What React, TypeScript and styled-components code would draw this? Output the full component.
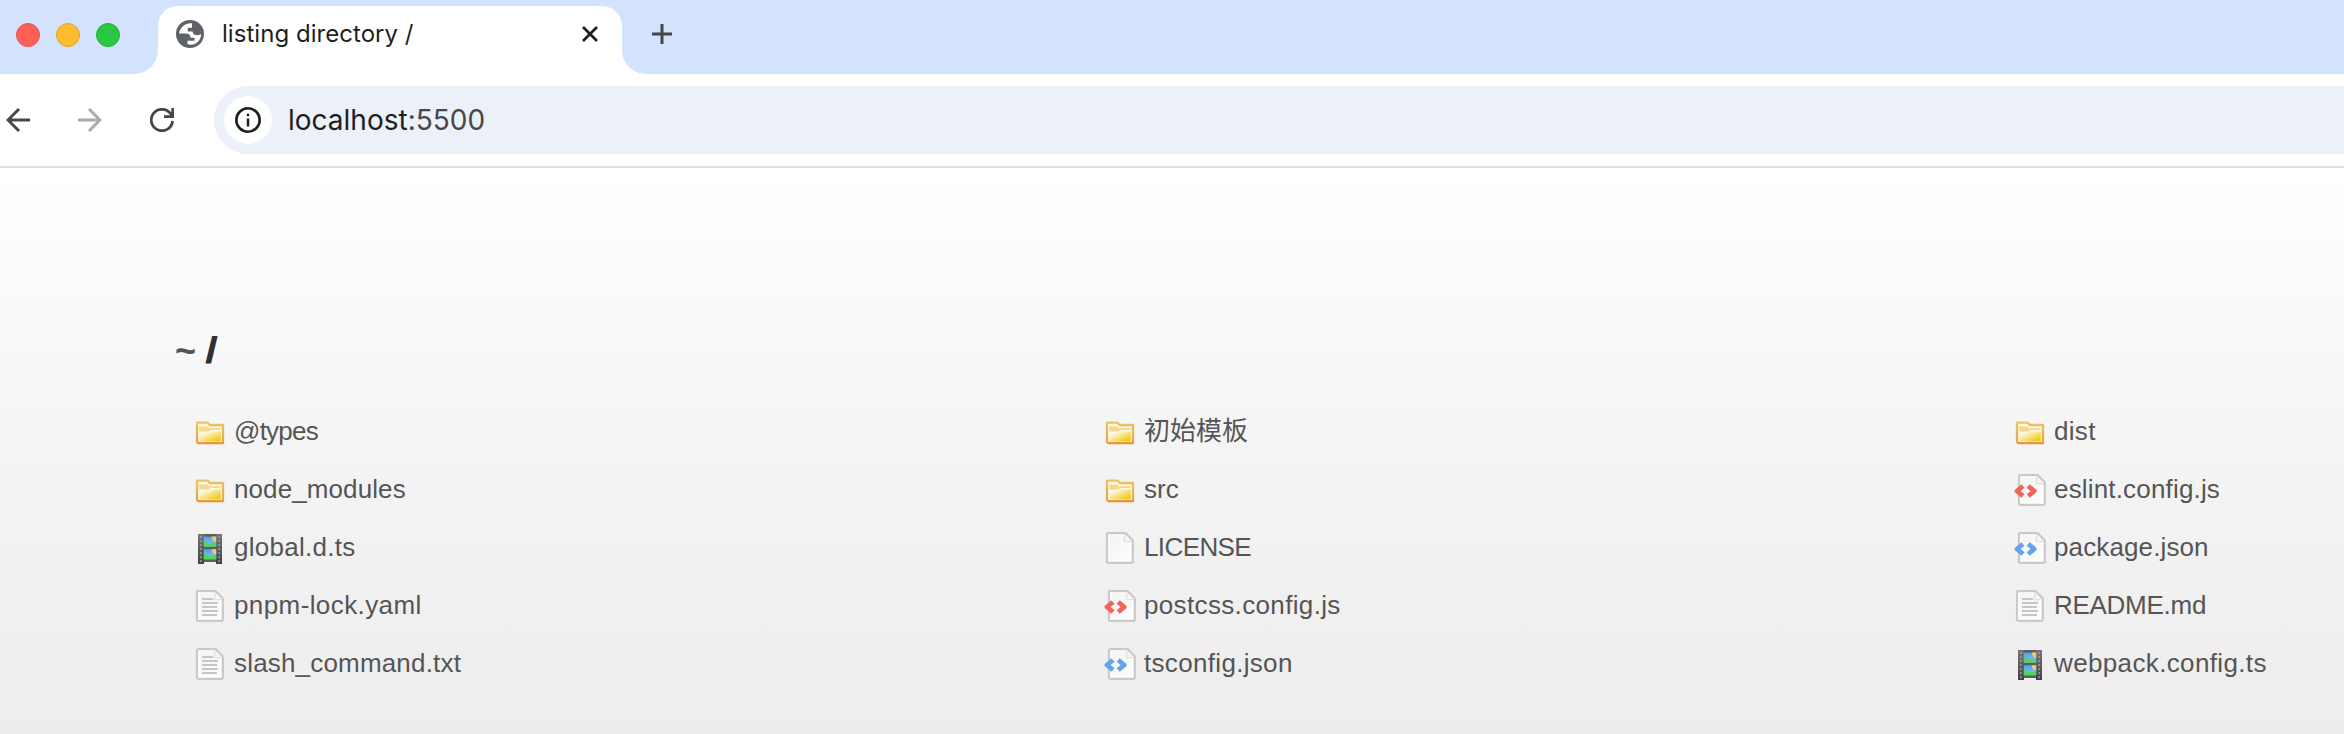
import React from "react";
import styled, { createGlobalStyle } from "styled-components";

const Global = createGlobalStyle`
  *, *::before, *::after { box-sizing: border-box; }
  body { margin: 0; overflow: hidden; background: #fff; }
  #root { height: 734px; }
`;

const Window = styled.div`
  display: flex;
  flex-direction: column;
  width: 100%;
  height: 734px;
  overflow: hidden;
`;

const TabStrip = styled.header`
  display: flex;
  flex: none;
  align-items: flex-start;
  height: 74px;
  background: #d3e3fd;
`;

const WindowControls = styled.div`
  display: flex;
  gap: 16px;
  width: 134px;
  padding: 23px 0 0 16px;
`;

const Light = styled.span<{ $fill: string; $edge: string }>`
  width: 24px;
  height: 24px;
  border-radius: 50%;
  border: 1px solid ${(p) => p.$edge};
  background: ${(p) => p.$fill};
`;

const Flare = styled.span<{ $side: "left" | "right" }>`
  flex: none;
  align-self: flex-end;
  width: 24px;
  height: 24px;
  background: radial-gradient(
    circle at ${(p) => (p.$side === "left" ? "0 0" : "100% 0")},
    transparent 23.5px,
    #fff 24.5px
  );
`;

const Tab = styled.div`
  display: flex;
  align-items: flex-start;
  width: 464px;
  height: 68px;
  margin-top: 6px;
  padding: 14px 23px 0 18px;
  border-radius: 20px 20px 0 0;
  background: #fff;
`;

const TabTitle = styled.span`
  flex: 1;
  margin: -1px 0 0 18px;
  font: 400 24px/30px Inter, "Liberation Sans", sans-serif;
  letter-spacing: 0.04px;
  color: #1f1f1f;
  white-space: nowrap;
`;

const NewTab = styled.svg`
  margin: 24px 0 0 6px;
`;

const TabClose = styled.svg`
  margin-top: 5px;
`;

const Toolbar = styled.div`
  display: flex;
  flex: none;
  align-items: center;
  height: 94px;
  border-bottom: 2px solid #e0e0e0;
  background: #fff;
`;

const NavButtons = styled.nav`
  display: flex;
  gap: 48px;
  width: 214px;
  padding-left: 6px;
`;

const AddressBar = styled.div`
  display: flex;
  flex: 1;
  align-items: center;
  height: 68px;
  padding-left: 10px;
  border-radius: 34px 0 0 34px;
  background: #ecf0f9;
`;

const SiteInfo = styled.span`
  display: grid;
  place-items: center;
  width: 48px;
  height: 48px;
  border-radius: 50%;
  background: #fff;
`;

const Address = styled.span`
  margin-left: 16px;
  font: 400 28px/34px Inter, "Liberation Sans", sans-serif;
  color: #1f1f1f;
`;

const Port = styled.span`
  color: #474747;
`;

const Page = styled.main`
  flex: 1;
  padding: 161px 0 0 175px;
  background: linear-gradient(#fff 0, #f4f4f4 290px, #f2f1f1 400px, #eeeced 566px);
  font-family: "Liberation Sans", sans-serif;
`;

const Heading = styled.h1`
  display: flex;
  gap: 9px;
  margin: 0;
  font-size: 36px;
  line-height: 44px;
  color: #303030;
`;

const HomeLink = styled.a`
  color: #555;
`;

const CurrentDir = styled.span`
  transform: scaleX(1.3);
  transform-origin: left;
`;

const Listing = styled.ul`
  display: grid;
  grid-template-columns: repeat(3, 910px);
  grid-auto-rows: 58px;
  margin: 30px 0 0;
  padding: 0 0 0 19px;
  list-style: none;
`;

const Entry = styled.li`
  display: flex;
  align-items: center;
`;

const Name = styled.span<{ $tracking: number }>`
  margin: 0 0 2px 8px;
  font-family: "Liberation Sans", "Noto Sans CJK SC", sans-serif;
  font-size: 26px;
  line-height: 30px;
  letter-spacing: ${(p) => p.$tracking}px;
  color: #555;
  white-space: nowrap;
`;

const Defs = styled.svg`
  display: block;
`;

type Kind = "folder" | "film" | "text" | "blank" | "red" | "blue";

const entries: [Kind, string, number][] = [
  ["folder", "@types", -0.75],
  ["folder", "初始模板", 0],
  ["folder", "dist", 0.3],
  ["folder", "node_modules", 0.1],
  ["folder", "src", 0],
  ["red", "eslint.config.js", 0.17],
  ["film", "global.d.ts", 0.27],
  ["blank", "LICENSE", -0.6],
  ["blue", "package.json", 0.12],
  ["text", "pnpm-lock.yaml", 0.4],
  ["red", "postcss.config.js", 0.35],
  ["text", "README.md", -0.28],
  ["text", "slash_command.txt", 0.18],
  ["blue", "tsconfig.json", 0.32],
  ["film", "webpack.config.ts", 0.36],
];

const Gradients = () => (
  <Defs width="0" height="0">
    <defs>
      <linearGradient id="folderEdge" x1="0" y1="0" x2="0" y2="1">
        <stop offset="0" stopColor="#e8c566" />
        <stop offset="1" stopColor="#e5a04f" />
      </linearGradient>
      <linearGradient id="folderFill" x1="0" y1="0" x2="1" y2="1">
        <stop offset="0.15" stopColor="#fffbe9" />
        <stop offset="0.5" stopColor="#f8e284" />
        <stop offset="0.85" stopColor="#f0cb1e" />
      </linearGradient>
      <linearGradient id="paper" x1="0" y1="0" x2="1" y2="1">
        <stop offset="0" stopColor="#f3f3f3" />
        <stop offset="1" stopColor="#fdfdfd" />
      </linearGradient>
      <linearGradient id="filmEdge" x1="0" y1="0" x2="0" y2="1">
        <stop offset="0" stopColor="#747474" />
        <stop offset="1" stopColor="#404040" />
      </linearGradient>
      <linearGradient id="sky" x1="0" y1="0" x2="0" y2="1">
        <stop offset="0" stopColor="#4aa0ea" />
        <stop offset="1" stopColor="#86cdf0" />
      </linearGradient>
    </defs>
  </Defs>
);

const Folder = () => (
  <>
    <path d="M1.5 3.3h5.3l1.1 1.2h6.600v9.100H2.200l-.7-.7z" fill="#fff6dc" stroke="url(#folderEdge)" strokeWidth="1.150" strokeLinejoin="round" />
    <path d="M2.600 5.200h3.900l.9.900h5.900v.9H8.200l-.9.800H2.600z" fill="#f3d88f" />
    <path d="M2.800 8.600h4.700l.9-.9h5v5H2.800z" fill="url(#folderFill)" />
    <path d="M1.800 13.600h12.900" stroke="#e39544" strokeWidth=".9" />
  </>
);

const Sheet = ({ x = 0 }: { x?: number }) => (
  <g transform={`translate(${x} 0)`}>
    <path d="M2 .6h8.800l3.600 3.600v10.700q0 .5-.5.5H2q-.5 0-.5-.5V1.100q0-.5.5-.5z" fill="#fff" stroke="#c9c9c9" strokeWidth="1.100" />
    <path d="M2.800 1.800h7.500v3h2.900v9.400H2.800z" fill="url(#paper)" />
    <path d="M10.300 1.300v3.500h3.600" fill="#f6f6f6" stroke="#e0e0e0" strokeWidth=".7" />
  </g>
);

const Film = () => (
  <>
    <rect x="2" y="1" width="12" height="14" fill="#5c5c5c" />
    <rect x="2" y="1" width="3" height="15" fill="url(#filmEdge)" />
    <rect x="11" y="1" width="3" height="15" fill="url(#filmEdge)" />
    {[2.3, 8.600].map((y) => (
      <g key={y} transform={`translate(4.900 ${y})`}>
        <rect width="6.200" height="5" fill="url(#sky)" />
        <path d="M3.900 0h2.300v2.700Q3.900 2.300 3.900 0z" fill="#f6c95c" />
        <path d="M0 2.100q1.700.2 3 1.500l3.200-.6v2H0z" fill="#52d460" />
      </g>
    ))}
    <path d="M3.400 2v13.500M12.600 2v13.500" stroke="#a8a8a8" strokeWidth=".9" strokeDasharray="1.100 .9" opacity=".75" />
  </>
);

const FileIcon = ({ kind }: { kind: Kind }) => (
  <svg width="32" height="32" viewBox="0 0 16 16">
    {kind === "folder" && <Folder />}
    {kind === "film" && <Film />}
    {(kind === "text" || kind === "blank") && <Sheet />}
    {kind === "text" && (
      <path d="M4 4.500h5.500M4 6.500h8M4 8.500h7.500M4 10.500h8M4 12.500h7.500" stroke="#c6c6c6" strokeWidth=".95" />
    )}
    {(kind === "red" || kind === "blue") && (
      <>
        <Sheet x={1} />
        <path
          d="M4.500 6 1.500 8.500l3 2.500M7.100 6l3 2.500-3 2.500"
          fill="none"
          stroke={kind === "red" ? "#f2635a" : "#62a5ea"}
          strokeWidth="2.400"
          strokeLinejoin="round"
        />
      </>
    )}
  </svg>
);

export default function App() {
  return (
    <Window>
      <Global />
      <TabStrip>
        <WindowControls>
          <Light $fill="#ff5f57" $edge="#e9544c" />
          <Light $fill="#febc2e" $edge="#dfa32a" />
          <Light $fill="#28c840" $edge="#22b038" />
        </WindowControls>
        <Flare $side="left" />
        <Tab>
          <svg width="28" height="28" viewBox="0 0 28 28">
            <circle cx="14" cy="14" r="14" fill="#5f6368" />
            <path d="M16 3.200C9.500 2.500 4 7 3 13.500h6.500c3.500 0 5 1.500 5 4.200H18.500v3h-7v3.400c2.300.9 5 .8 7.200-.1 4-1.800 6.300-5.400 6.300-10-1.600 1.200-3.600 1.500-5.500 1-2-.5-2.800-1.700-2.800-3.600h-4.900V7.700H16z" fill="#fff" />
          </svg>
          <TabTitle>listing directory /</TabTitle>
          <TabClose width="18" height="18" viewBox="0 0 18 18">
            <path d="m2 2 14 14M16 2 2 16" stroke="#1f1f1f" strokeWidth="2.800" />
          </TabClose>
        </Tab>
        <Flare $side="right" />
        <NewTab width="20" height="20" viewBox="0 0 20 20">
          <path d="M10 0v20M0 10h20" stroke="#474747" strokeWidth="3" />
        </NewTab>
      </TabStrip>
      <Toolbar>
        <NavButtons>
          <svg width="24" height="24" viewBox="0 0 24 24">
            <path d="M24 12H2M13 1 2 12l11 11" fill="none" stroke="#474747" strokeWidth="2.900" />
          </svg>
          <svg width="24" height="24" viewBox="0 0 24 24">
            <path d="M0 12h22M11 1l11 11-11 11" fill="none" stroke="#ababab" strokeWidth="2.900" />
          </svg>
          <svg width="24" height="24" viewBox="0 0 24 24">
            <path d="M22.600 13A10.700 10.700 0 1 1 20.200 5.200L22.500 8.500M22.700 0v8.700H14" fill="none" stroke="#474747" strokeWidth="2.800" />
          </svg>
        </NavButtons>
        <AddressBar>
          <SiteInfo>
            <svg width="26" height="26" viewBox="0 0 26 26">
              <circle cx="13" cy="13" r="11.700" fill="none" stroke="#1f1f1f" strokeWidth="2.600" />
              <path d="M13 11.500v8M13 6.700v2.500" stroke="#1f1f1f" strokeWidth="2.500" />
            </svg>
          </SiteInfo>
          <Address>
            localhost<Port>:5500</Port>
          </Address>
        </AddressBar>
      </Toolbar>
      <Page>
        <Gradients />
        <Heading>
          <HomeLink>~</HomeLink>
          <CurrentDir>/</CurrentDir>
        </Heading>
        <Listing>
          {entries.map(([kind, name, tracking]) => (
            <Entry key={name}>
              <FileIcon kind={kind} />
              <Name $tracking={tracking}>{name}</Name>
            </Entry>
          ))}
        </Listing>
      </Page>
    </Window>
  );
}
